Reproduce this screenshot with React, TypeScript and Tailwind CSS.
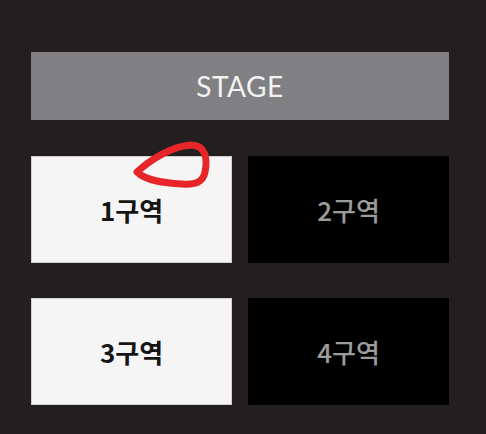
export default function App() {
  const zones = [
    { label: "1구역", on: true },
    { label: "2구역", on: false },
    { label: "3구역", on: true },
    { label: "4구역", on: false },
  ];

  return (
    <div className="relative min-h-[434px] w-[486px] bg-[#231f20] pt-[52px] pl-[31px]">
      <div className="w-[418px]">
        <div
          className="flex h-[68px] items-center justify-center bg-[#808083] text-[28px] tracking-[0.02em] text-[#f2f2f2]"
          style={{ fontFamily: "Lato, 'Open Sans', sans-serif" }}
        >
          STAGE
        </div>
        <div className="mt-[36px] grid grid-cols-2 gap-x-[16px] gap-y-[35px]">
          {zones.map((z) => (
            <div
              key={z.label}
              className={
                z.on
                  ? "flex h-[107px] items-center justify-center border border-[#d0d0d0] bg-[#f5f5f5] text-[26px] font-bold text-[#151515]"
                  : "flex h-[107px] items-center justify-center bg-black text-[26px] font-medium text-[#9c9c9c]"
              }
              style={{ fontFamily: "'Noto Sans CJK KR', 'Noto Sans', sans-serif" }}
            >
              {z.label}
            </div>
          ))}
        </div>
      </div>

      {/* red marker scribble */}
      <svg className="pointer-events-none absolute left-0 top-0" width="486" height="434">
        <path
          d="M137 172 C150 160, 172 146, 191 145 C205 145, 208 158, 205 172 C203 182, 196 185, 182 184 C165 183, 146 181, 137 172 Z"
          fill="none"
          stroke="#e8262a"
          strokeWidth="7"
          strokeLinejoin="round"
        />
      </svg>
    </div>
  );
}
